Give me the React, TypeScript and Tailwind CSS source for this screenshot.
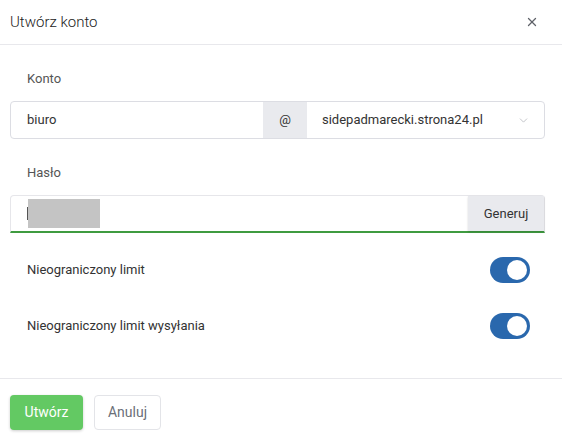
import { X, ChevronDown } from "lucide-react";

function Toggle({ on = true }: { on?: boolean }) {
  return (
    <div
      className={`w-[40px] h-[26px] rounded-full flex items-center px-[3px] ${
        on ? "bg-[#2a68ad] justify-end" : "bg-gray-300 justify-start"
      }`}
    >
      <div className="w-[20px] h-[20px] rounded-full bg-white" />
    </div>
  );
}

export default function App() {
  return (
    <div className="w-[562px] h-[446px] bg-white text-[#333] font-['Roboto',sans-serif] overflow-hidden">
      {/* Header */}
      <div className="h-[45px] flex items-center justify-between pl-[10px] pr-[23px] border-b border-[#e8e8ec]">
        <h1 className="text-[15px] font-light text-[#222] leading-none">Utwórz konto</h1>
        <X className="w-[14px] h-[14px] text-[#5f6269]" strokeWidth={2.2} />
      </div>

      {/* Body */}
      <div className="pl-[10px] pr-[17px] pt-[25px] pb-[39px] border-b border-[#e8e8ec]">
        <div className="pl-[17px] text-[13px] leading-[18px] text-[#555]">Konto</div>
        <div className="mt-[13px] flex h-[38px] border border-[#dcdde3] rounded-[4px] text-[13px]">
          <div className="flex-1 flex items-center pl-[16px]">biuro</div>
          <div className="w-[44px] bg-[#e9eaee] flex items-center justify-center">@</div>
          <div className="w-[237px] flex items-center justify-between pl-[15px] pr-[14px]">
            <span>sidepadmarecki.strona24.pl</span>
            <ChevronDown className="w-[13px] h-[13px] text-[#b5b7bd]" strokeWidth={1.5} />
          </div>
        </div>

        <div className="mt-[25px] pl-[17px] text-[13px] leading-[18px] text-[#555]">Hasło</div>
        <div className="mt-[13px] flex h-[38px] border border-[#e6e6ea] border-b-2 border-b-[#3f9b40] rounded-t-[4px] text-[13px]">
          <div className="flex-1 flex items-center pl-[16px]">
            <span className="w-[1px] h-[13px] bg-[#555]" />
            <span className="w-[72px] h-[29px] bg-[#c4c4c4]" />
          </div>
          <div className="w-[76px] bg-[#e9eaee] flex items-center justify-center text-[#333] shadow-[0_1px_2px_rgba(0,0,0,0.15)]">
            Generuj
          </div>
        </div>

        <div className="mt-[24px] flex items-center justify-between pl-[17px] pr-[15px]">
          <span className="text-[13px]">Nieograniczony limit</span>
          <Toggle />
        </div>
        <div className="mt-[30px] flex items-center justify-between pl-[17px] pr-[15px]">
          <span className="text-[13px]">Nieograniczony limit wysyłania</span>
          <Toggle />
        </div>
      </div>

      {/* Footer */}
      <div className="pl-[10px] pt-[16px] flex gap-[11px]">
        <button className="w-[73px] h-[35px] rounded-[4px] bg-[#63c963] text-white text-[14px] shadow-[0_1px_3px_rgba(0,0,0,0.2)]">
          Utwórz
        </button>
        <button className="w-[67px] h-[35px] rounded-[4px] border border-[#e3e4e8] bg-white text-[#6b6f78] text-[14px]">
          Anuluj
        </button>
      </div>
    </div>
  );
}
